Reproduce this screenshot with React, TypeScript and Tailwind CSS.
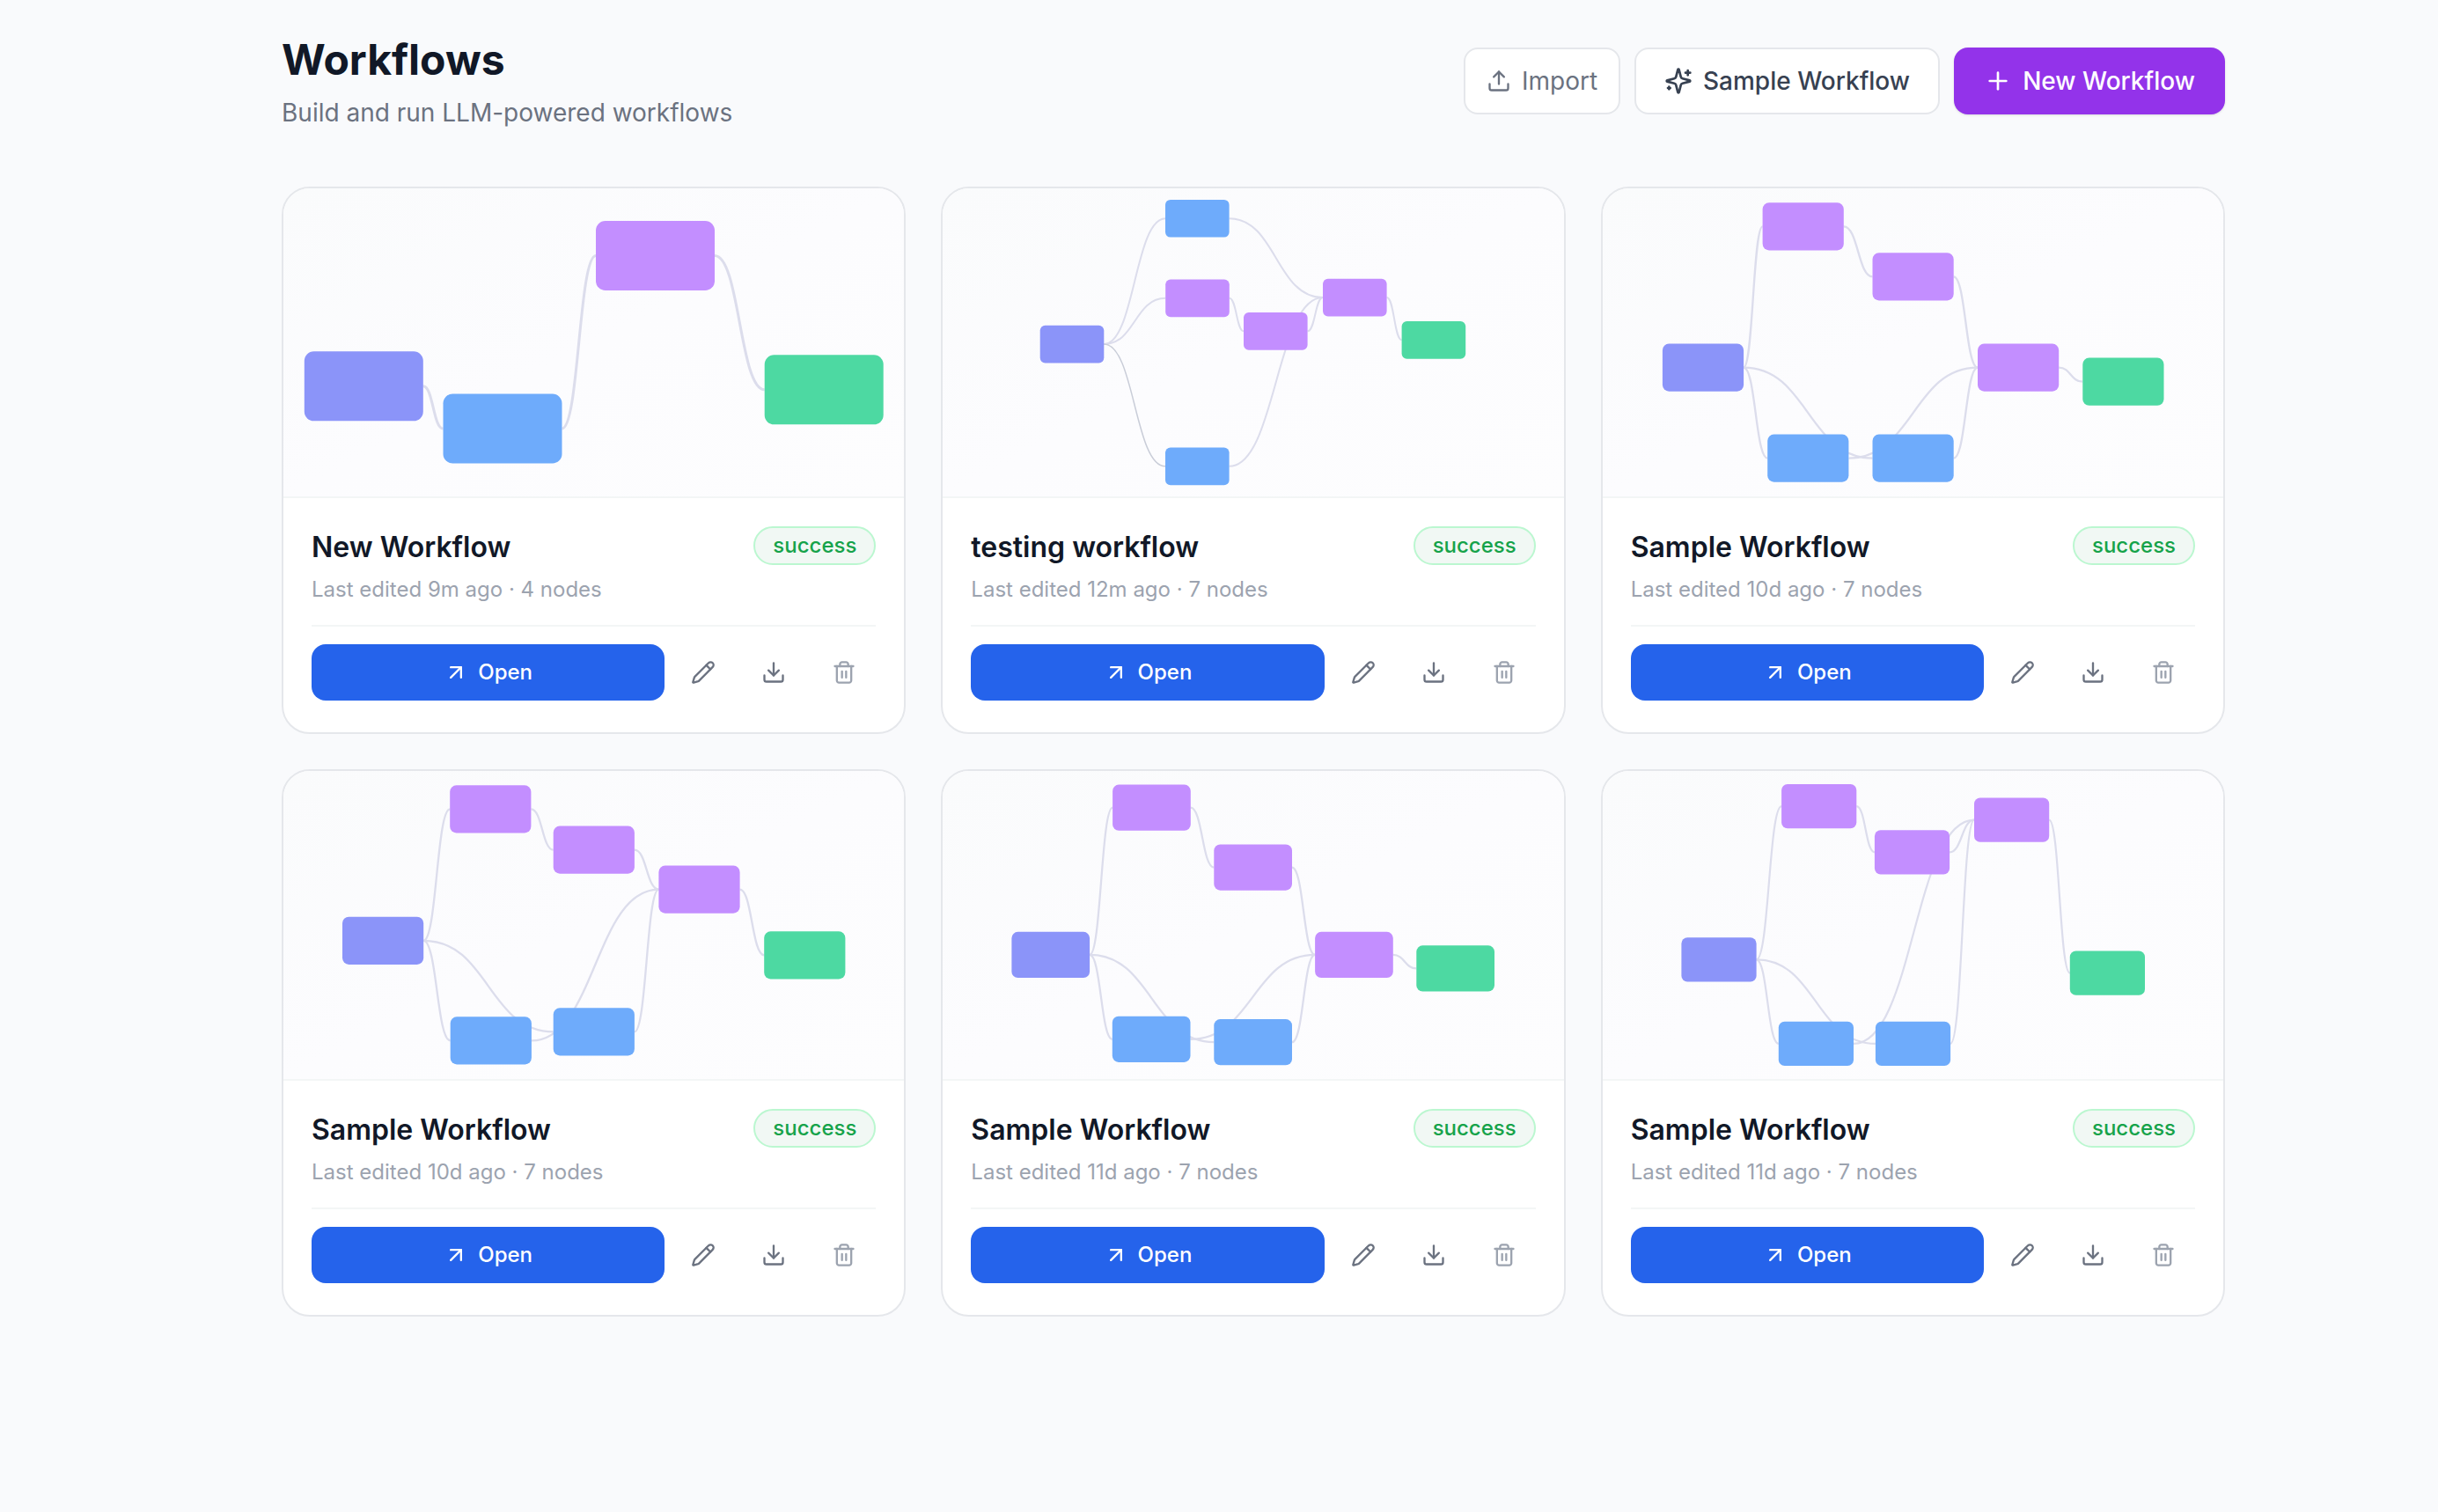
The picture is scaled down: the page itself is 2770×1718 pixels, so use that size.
import { useState, type ReactNode } from "react";

type Kind = "input" | "tool" | "llm" | "output";

type Node = { x: number; y: number; kind: Kind };

type Workflow = {
  name: string;
  edited: string;
  w: number;
  h: number;
  nodes: Node[];
  edges: [number, number][];
  active?: number; // index of the highlighted edge
};

const colors: Record<Kind, string> = {
  input: "#8b94f9",
  tool: "#6eabfb",
  llm: "#c38eff",
  output: "#4dd9a2",
};

const workflows: Workflow[] = [
  {
    name: "New Workflow",
    edited: "9m ago",
    w: 135,
    h: 79,
    nodes: [
      { x: 23.8, y: 185.3, kind: "input" },
      { x: 181.5, y: 233.5, kind: "tool" },
      { x: 355, y: 37, kind: "llm" },
      { x: 546.7, y: 189.3, kind: "output" },
    ],
    edges: [[0, 1], [1, 2], [2, 3]],
  },
  {
    name: "testing workflow",
    edited: "12m ago",
    w: 72.6,
    h: 42.7,
    nodes: [
      { x: 110.7, y: 155.7, kind: "input" },
      { x: 253, y: 12.9, kind: "tool" },
      { x: 253.2, y: 103.5, kind: "llm" },
      { x: 253, y: 294.5, kind: "tool" },
      { x: 342, y: 141, kind: "llm" },
      { x: 432, y: 102.7, kind: "llm" },
      { x: 521.6, y: 151, kind: "output" },
    ],
    edges: [[0, 1], [0, 2], [0, 3], [2, 4], [1, 5], [4, 5], [3, 5], [5, 6]],
    active: 2,
  },
  {
    name: "Sample Workflow",
    edited: "10d ago",
    w: 92.2,
    h: 54.2,
    nodes: [
      { x: 67.9, y: 176.5, kind: "input" },
      { x: 181.6, y: 16.3, kind: "llm" },
      { x: 306.5, y: 73.3, kind: "llm" },
      { x: 187.2, y: 279.5, kind: "tool" },
      { x: 306.5, y: 279.5, kind: "tool" },
      { x: 426, y: 176.5, kind: "llm" },
      { x: 545.3, y: 192.6, kind: "output" },
    ],
    edges: [[0, 1], [0, 3], [0, 4], [1, 2], [2, 5], [3, 5], [4, 5], [5, 6]],
  },
  {
    name: "Sample Workflow",
    edited: "10d ago",
    w: 92.2,
    h: 54.2,
    nodes: [
      { x: 67, y: 165.7, kind: "input" },
      { x: 189.2, y: 16.3, kind: "llm" },
      { x: 306.7, y: 62.5, kind: "llm" },
      { x: 189.7, y: 279.3, kind: "tool" },
      { x: 306.7, y: 269.3, kind: "tool" },
      { x: 426.4, y: 107.5, kind: "llm" },
      { x: 546.2, y: 182.3, kind: "output" },
    ],
    edges: [[0, 1], [0, 3], [0, 4], [1, 2], [2, 5], [3, 5], [4, 5], [5, 6]],
  },
  {
    name: "Sample Workflow",
    edited: "11d ago",
    w: 88.7,
    h: 52.2,
    nodes: [
      { x: 78.4, y: 182.8, kind: "input" },
      { x: 193.1, y: 15.6, kind: "llm" },
      { x: 308.3, y: 83.5, kind: "llm" },
      { x: 192.8, y: 278.7, kind: "tool" },
      { x: 308.3, y: 282.1, kind: "tool" },
      { x: 423.1, y: 182.8, kind: "llm" },
      { x: 538.3, y: 198.3, kind: "output" },
    ],
    edges: [[0, 1], [0, 3], [0, 4], [1, 2], [2, 5], [3, 5], [4, 5], [5, 6]],
  },
  {
    name: "Sample Workflow",
    edited: "11d ago",
    w: 85.2,
    h: 50.2,
    nodes: [
      { x: 89.4, y: 189.3, kind: "input" },
      { x: 203.1, y: 15, kind: "llm" },
      { x: 308.9, y: 67.2, kind: "llm" },
      { x: 199.8, y: 284.8, kind: "tool" },
      { x: 309.9, y: 284.8, kind: "tool" },
      { x: 422, y: 30.6, kind: "llm" },
      { x: 530.8, y: 204.5, kind: "output" },
    ],
    edges: [[0, 1], [0, 3], [0, 4], [1, 2], [2, 5], [3, 5], [4, 5], [5, 6]],
  },
];

function Icon({ size, children }: { size: number; children: ReactNode }) {
  return (
    <svg width={size} height={size} viewBox="0 0 24 24" fill="none" stroke="currentColor" strokeWidth={2} strokeLinecap="round" strokeLinejoin="round" className="shrink-0">
      {children}
    </svg>
  );
}

function Preview({ flow }: { flow: Workflow }) {
  const { nodes, edges, w, h, active } = flow;
  return (
    <div className="h-[352px] border-b-2 border-[#f3f6f6] bg-linear-to-br from-[#fafbfc] via-[#fcfcfe] to-[#fdfdfe]">
      <svg width="705" height="350" viewBox="0 0 705 350" className="block">
        {edges.map(([a, b], i) => {
          const x1 = nodes[a].x + w;
          const y1 = nodes[a].y + h / 2;
          const x2 = nodes[b].x;
          const y2 = nodes[b].y + h / 2;
          const mid = (x1 + x2) / 2;
          return (
            <path
              key={`${a}-${b}`}
              d={`M${x1},${y1} C${mid},${y1} ${mid},${y2} ${x2},${y2}`}
              fill="none"
              stroke={i === active ? "#c9cdd8" : "#dcddec"}
              strokeWidth={i === active ? 1.5 : 0.8 + w * 0.0165}
            />
          );
        })}
        {nodes.map((n, i) => (
          <rect key={i} x={n.x} y={n.y} width={w} height={h} rx={w * 0.08} fill={colors[n.kind]} />
        ))}
      </svg>
    </div>
  );
}

function WorkflowCard({ flow }: { flow: Workflow }) {
  return (
    <div className="h-[622px] overflow-hidden rounded-[32px] border-2 border-[#e5e7eb] bg-white">
      <Preview flow={flow} />
      <div className="p-8">
        <div className="flex items-start justify-between">
          <h3 className="text-[32px] leading-[48px] font-semibold text-[#111827]">{flow.name}</h3>
          <span className="flex h-11 items-center rounded-full border-2 border-[#bbf7d0] bg-[#f1f8f4] px-5 text-2xl font-medium text-[#16a34a]">
            success
          </span>
        </div>
        <p className="mt-2 text-2xl text-[#9ca3af]">
          Last edited {flow.edited} · {flow.nodes.length} nodes
        </p>
        <div className="mt-6 flex items-center gap-2 border-t-2 border-[#f3f6f6] pt-5">
          <button className="flex h-16 flex-1 items-center justify-center gap-[11px] rounded-2xl bg-[#2563eb] text-2xl font-medium text-white">
            <Icon size={28}>
              <path d="M7 7h10v10" />
              <path d="M7 17 17 7" />
            </Icon>
            Open
          </button>
          <button className="flex h-16 w-[72px] items-center justify-center text-[#6b7280]" aria-label="Rename">
            <Icon size={28}>
              <path d="M21.2 6.8a1 1 0 0 0-4-4L3.8 16.2a2 2 0 0 0-.5.8L2 21.4a.5.5 0 0 0 .6.6l4.4-1.3a2 2 0 0 0 .8-.5z" />
              <path d="m15 5 4 4" />
            </Icon>
          </button>
          <button className="flex h-16 w-[72px] items-center justify-center text-[#6b7280]" aria-label="Download">
            <Icon size={28}>
              <path d="M12 15V3" />
              <path d="M21 15v4a2 2 0 0 1-2 2H5a2 2 0 0 1-2-2v-4" />
              <path d="m7 10 5 5 5-5" />
            </Icon>
          </button>
          <button className="flex h-16 w-[72px] items-center justify-center text-[#9ca3af]" aria-label="Delete">
            <Icon size={28}>
              <path d="M3 6h18" />
              <path d="M19 6v14c0 1-1 2-2 2H7c-1 0-2-1-2-2V6" />
              <path d="M8 6V4c0-1 1-2 2-2h4c1 0 2 1 2 2v2" />
              <path d="M10 11v6" />
              <path d="M14 11v6" />
            </Icon>
          </button>
        </div>
      </div>
    </div>
  );
}

export default function App() {
  const [items] = useState(workflows);

  return (
    <div className="h-[1718px] overflow-hidden bg-[#f9fafc] font-['Inter',sans-serif]">
      <div className="ml-80 w-[2208px] pt-9">
        <div className="flex h-44 items-start justify-between">
          <div>
            <h1 className="text-5xl leading-[64px] font-bold text-[#111827]">Workflows</h1>
            <p className="mt-2 text-[28px] leading-10 text-[#6b7280]">Build and run LLM-powered workflows</p>
          </div>
          <div className="mt-[18px] flex gap-4">
            <button className="flex h-[76px] w-[178px] items-center justify-center gap-3 rounded-2xl border-2 border-[#e5e7eb] bg-white text-[28px] text-[#6b7280]">
              <Icon size={28}>
                <path d="M12 3v12" />
                <path d="m17 8-5-5-5 5" />
                <path d="M21 15v4a2 2 0 0 1-2 2H5a2 2 0 0 1-2-2v-4" />
              </Icon>
              Import
            </button>
            <button className="flex h-[76px] w-[347px] items-center justify-center gap-3 rounded-2xl border-2 border-[#e5e7eb] bg-white text-[28px] font-medium text-[#374151]">
              <Icon size={32}>
                <path d="M9.937 15.5A2 2 0 0 0 8.5 14.063l-6.135-1.582a.5.5 0 0 1 0-.962L8.5 9.936A2 2 0 0 0 9.937 8.5l1.582-6.135a.5.5 0 0 1 .963 0L14.063 8.5A2 2 0 0 0 15.5 9.937l6.135 1.581a.5.5 0 0 1 0 .964L15.5 14.063a2 2 0 0 0-1.437 1.437l-1.582 6.135a.5.5 0 0 1-.963 0z" />
                <path d="M20 3v4" />
                <path d="M22 5h-4" />
                <path d="M4 17v2" />
                <path d="M5 18H3" />
              </Icon>
              Sample Workflow
            </button>
            <button className="flex h-[76px] w-[308px] items-center justify-center gap-3 rounded-2xl bg-[#9333ea] text-[28px] font-medium text-white shadow-sm">
              <Icon size={32}>
                <path d="M5 12h14" />
                <path d="M12 5v14" />
              </Icon>
              New Workflow
            </button>
          </div>
        </div>
        <div className="grid grid-cols-3 gap-10">
          {items.map((flow, i) => (
            <WorkflowCard key={i} flow={flow} />
          ))}
        </div>
      </div>
    </div>
  );
}
